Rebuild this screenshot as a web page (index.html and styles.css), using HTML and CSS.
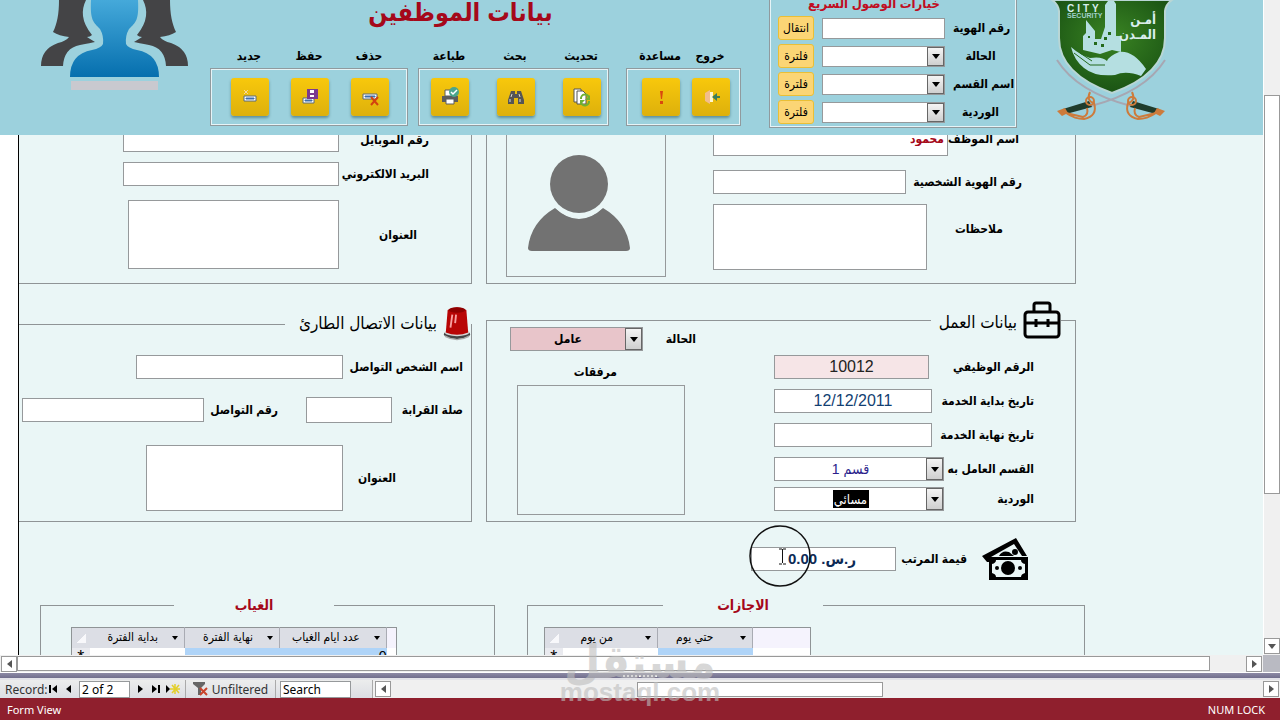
FILE: index.html
```html
<!DOCTYPE html>
<html lang="ar">
<head>
<meta charset="utf-8">
<title>بيانات الموظفين</title>
<link rel="stylesheet" href="styles.css">
</head>

<body>
<div id="work">
  <div id="form">

    <div id="header">
      <svg class="people" viewBox="0 0 150 92">
        <defs><linearGradient id="blue" x1="0" y1="0" x2="0" y2="1"><stop offset="0" stop-color="#45a9da"/><stop offset="1" stop-color="#066fae"/></linearGradient></defs>
        <path fill="#444446" d="M19 0C19 14 17 24 13 32Q19 36 29 37Q26 41 18 43Q1 49 1 66H23Q24 48 40 45Q51 43 55 42Q50 39 47 37Q50 37 52 35Q44 25 43 16Q42 8 46 0Z"/>
        <path fill="#444446" d="M130 0C130 14 132 24 136 32Q130 36 120 37Q123 41 131 43Q148 49 148 66H126Q125 48 109 45Q98 43 94 42Q99 39 102 37Q99 37 97 35Q105 25 106 16Q107 8 103 0Z"/>
        <path fill="url(#blue)" d="M51 0C50 20 53 22 60 29Q64 36 63 44Q61 48 52 50Q30 54 30 77H119Q119 54 97 50Q88 48 86 44Q85 36 89 29C96 22 99 20 98 0Z"/>
        <path fill="#c9c9cf" d="M31 81H118V90H31Z"/>
      </svg>

      <div id="tools">
        <h1 dir="rtl">بيانات الموظفين</h1>
        <div class="groups">
          <div class="group edit">
            <div class="names"><label for="new">جديد</label><label for="save">حفظ</label><label for="del">حذف</label></div>
            <div class="box">
              <button id="new"><svg viewBox="0 0 20 20"><path d="M4 9h12v5H4z" fill="#fff" stroke="#5b6b7d"/><path d="M6 11h8v1H6z" fill="#3f6fae" stroke="#3f6fae"/><path d="M4 3l4 4M8 3L4 7" stroke="#f6d9a0"/></svg></button>
              <button id="save"><svg viewBox="0 0 20 20"><path d="M3 11h11v5H3z" fill="#fff" stroke="#5b6b7d"/><path d="M5 13h7v1H5z" fill="#3f6fae" stroke="#3f6fae"/><path d="M7 2h11v10H7z" fill="#7b3a90"/><path d="M10 3h4v3h-4zM10 8h4v2h-4z" fill="#fff"/></svg></button>
              <button id="del"><svg viewBox="0 0 20 20"><path d="M3 7h14v5H3z" fill="#fff" stroke="#5b6b7d"/><path d="M5 9h10v1H5z" fill="#3f6fae" stroke="#3f6fae"/><path d="M11 10l7 8M18 10l-7 8" stroke="#d2420f" stroke-width="2"/></svg></button>
            </div>
          </div>
          <div class="group find">
            <div class="names"><label for="print">طباعة</label><label for="search">بحث</label><label for="refresh">تحديث</label></div>
            <div class="box">
              <button id="print"><svg viewBox="0 0 20 20"><path d="M2 9h16v6H2z" fill="#5d5d5d"/><path d="M5 3h7v6H5zM6 12h8v5H6z" fill="#fff" stroke="#5d5d5d"/><circle cx="14" cy="5" r="5" fill="#4ba58c"/><path d="M11 5l2 2 4-4" fill="none" stroke="#fff" stroke-width="1.500"/></svg></button>
              <button id="search"><svg viewBox="0 0 20 20"><path d="M5 4h4v3h2V4h4l3 9v4h-6v-6H8v6H2v-4z" fill="#555"/><path d="M4 12v3M6 7l-1 3M14 12v3M13 7l1 3" stroke="#ddd"/></svg></button>
              <button id="refresh"><svg viewBox="0 0 20 20"><path d="M2 2h7v13H2z" fill="#fff" stroke="#555"/><path d="M5 4h6l3 3v10H5z" fill="#fff" stroke="#555"/><path d="M9 12a4 4 0 0 1 8-1M17 14a4 4 0 0 1-8 1" fill="none" stroke="#6fb032" stroke-width="2"/><path d="M18 8v5h-5zM8 18v-5h5z" fill="#6fb032"/></svg></button>
            </div>
          </div>
          <div class="group leave">
            <div class="names"><label for="help">مساعدة</label><label for="exit">خروج</label></div>
            <div class="box">
              <button id="help"><svg viewBox="0 0 20 20"><path d="M9 4h3l-1 8H10zM9 14h3v3H9z" fill="#d9480f"/></svg></button>
              <button id="exit"><svg viewBox="0 0 20 20"><path d="M4 6l5-3v14l-5-3z" fill="#f2bd8c"/><path d="M9 5h3v10H9z" fill="#fff6d0"/><path d="M11 10l5-4v3h3v2h-3v3z" fill="#3c7d5a"/></svg></button>
            </div>
          </div>
        </div>
      </div>

      <div id="quick">
        <h2 dir="rtl">خيارات الوصول السريع</h2>
        <div class="line"><button>انتقال</button><input id="q1"><label for="q1">رقم الهوية</label></div>
        <div class="line"><button>فلترة</button><div class="combo"><select id="q2"></select><i></i></div><label for="q2">الحالة</label></div>
        <div class="line"><button>فلترة</button><div class="combo"><select id="q3"></select><i></i></div><label for="q3">اسم القسم</label></div>
        <div class="line"><button>فلترة</button><div class="combo"><select id="q4"></select><i></i></div><label for="q4">الوردية</label></div>
      </div>

      <svg class="shield" viewBox="0 0 128 124">
        <defs><radialGradient id="green" cx="50%" cy="40%" r="65%"><stop offset="0" stop-color="#3a8423"/><stop offset="1" stop-color="#174f12"/></radialGradient></defs>
        <path d="M10 60Q30 92 84 106M118 60Q98 92 44 106" fill="none" stroke="#a7a7b2" stroke-width="2"/>
        <path d="M5 0Q11 4 12 11V38C12 68 40 84 65 93C90 84 118 68 118 38V11Q119 4 125 0Z" fill="url(#green)" stroke="#b9d6d5" stroke-width="2"/>
        <path d="M36 50V36l3-3V20l9 11v8h6l4-12V5l3-4h6l2 3v32h5v16l-9-2-12 4z" fill="#b5dfe1"/>
        <path d="M41 36h2v2h-2zM47 42h3v3h-3zM54 44h3v3h-3zM61 32h3v3h-3zM57 37h3v3h-3z" fill="#23691a"/>
        <path d="M24 47Q33 55 43 58Q55 56 60 61Q62 56 72 52Q86 50 99 69L94 76Q79 70 68 75Q48 77 37 68Q27 60 24 47Z" fill="#b5dfe1"/>
        <path d="M27 53L43 65H58M33 53L45 61" fill="none" stroke="#23691a"/>
        <text x="20" y="12" class="city">CITY</text>
        <text x="20" y="18" class="security">SECURITY</text>
        <text x="109" y="24" class="amn">أمـن</text>
        <text x="109" y="39" class="amn">المـدن</text>
        <path d="M16 109L42 101l3 6-26 7z" fill="#1f3c2c"/><path d="M112 109L86 101l-3 6 26 7z" fill="#1f3c2c"/>
        <g fill="none" stroke="#cd7b3b" stroke-width="2"><circle cx="43" cy="101" r="4"/><circle cx="85" cy="101" r="4"/><path d="M43 92q-4 9 4 11q4 13-10 16q-9 0-18-6l17 4q6-2 4-9M85 92q4 9-4 11q-4 13 10 16q9 0 18-6l-17 4q-6-2-4-9"/></g>
        <path d="M10 111l8-3 3 5-6 3zM118 111l-8-3-3 5 6 3z" fill="#cd7b3b"/>
      </svg>
    </div>

    <div id="page">
      <div id="scrolled" dir="rtl">

        <div class="row first">
          <div class="panel person">
            <div class="fields">
              <div class="line name"><label for="name">اسم الموظف</label><input id="name" value="محمود"></div>
              <div class="line ident"><label for="ident">رقم الهوية الشخصية</label><input id="ident"></div>
              <div class="line notes"><label for="notes">ملاحظات</label><textarea id="notes"></textarea></div>
            </div>
            <div class="photo">
              <svg viewBox="0 0 104 98"><path d="M28 54Q52 76 76 54Q100 68 103 94Q103 97 99 97H5Q1 97 1 94Q4 68 28 54Z" fill="#727272"/><ellipse cx="52" cy="30" rx="33" ry="34" fill="#eaf6f6"/><ellipse cx="52" cy="30" rx="29" ry="29" fill="#727272"/></svg>
            </div>
          </div>
          <div class="panel contact">
            <div class="line"><label for="mobile">رقم الموبايل</label><input id="mobile"></div>
            <div class="line"><label for="email">البريد الالكتروني</label><input id="email"></div>
            <div class="line addr"><label for="addr">العنوان</label><textarea id="addr"></textarea></div>
          </div>
        </div>

        <div class="row second">
          <fieldset class="job">
            <legend>
              <svg viewBox="0 0 38 38" fill="none" stroke="#000" stroke-width="3"><rect x="2" y="11" width="34" height="25" rx="3"/><path d="M11 11V4q0-2 2-2h12q2 0 2 2v7M2 22h34M13 18v8M25 18v8"/></svg>
              <span>بيانات العمل</span>
            </legend>
            <div class="cols">
              <div class="fields">
                <div class="line num"><label for="num">الرقم الوظيفي</label><input id="num" value="10012"></div>
                <div class="line"><label for="from">تاريخ بداية الخدمة</label><input id="from" value="12/12/2011"></div>
                <div class="line"><label for="to">تاريخ نهاية الخدمة</label><input id="to"></div>
                <div class="line pick"><label for="dept">القسم العامل به</label><div class="combo" dir="ltr"><select id="dept" dir="rtl"><option>قسم 1</option></select><i></i></div></div>
                <div class="line pick"><label for="shift">الوردية</label><div class="combo" dir="ltr"><select id="shift" dir="rtl"><option>مسائي</option></select><i></i></div></div>
              </div>
              <div class="status">
                <div class="line"><label for="state">الحالة</label><div class="combo" dir="ltr"><select id="state" dir="rtl"><option>عامل</option></select><i></i></div></div>
                <b>مرفقات</b>
                <div class="files"></div>
              </div>
            </div>
          </fieldset>
          <fieldset class="urgent">
            <legend>
              <svg viewBox="0 0 30 38"><ellipse cx="15" cy="30" rx="14" ry="5" fill="#444"/><ellipse cx="15" cy="28" rx="13" ry="4" fill="#d8d8d8"/><path d="M2 31q13 8 26 0v2q-13 7-26 0z" fill="#aaa"/><path d="M5 4Q15-2 25 4l2 24Q15 33 3 28Z" fill="#b80505"/><ellipse cx="15" cy="4" rx="9" ry="3" fill="#8f0000"/><path d="M10 9l-2 14M14 9l-1 9" stroke="#f7a0a0" stroke-width="2"/></svg>
              <span>بيانات الاتصال الطارئ</span>
            </legend>
            <div class="line who"><label for="who">اسم الشخص التواصل</label><input id="who"></div>
            <div class="line rel"><label for="rel">صلة القرابة</label><input id="rel"><label for="phone">رقم التواصل</label><input id="phone"></div>
            <div class="line addr2"><label for="addr2">العنوان</label><textarea id="addr2"></textarea></div>
          </fieldset>
        </div>

        <div class="salary">
          <svg viewBox="0 0 46 44"><path d="M0 19L34 1l11 18h-5L32 7 9 20v5H5z" fill="#000"/><path d="M17 19q3-6 10-4l5 4z" fill="#000"/><circle cx="33" cy="15" r="3"/><path d="M7 20h39v23H7z" fill="#000"/><path d="M14 23h25q0 3 4 4v9q-4 1-4 4H14q0-3-4-4v-9q4-1 4-4z" fill="#eaf6f6"/><circle cx="26" cy="31" r="7" fill="#000"/><circle cx="15" cy="31" r="2"/><circle cx="38" cy="31" r="2"/></svg>
          <label for="pay">قيمة المرتب</label>
          <div class="pay">
            <input id="pay" value="ر.س. 0.00">
            <svg class="pointer" viewBox="0 0 62 62" fill="none" stroke="#111"><circle cx="31" cy="31" r="30" stroke-width="1.500"/><path d="M30 24h3M34 24h3M33.500 24v14M30 39h3M34 39h3"/></svg>
          </div>
        </div>

        <div class="row third">
          <fieldset class="leaves">
            <legend><span>الاجازات</span></legend>
            <table dir="ltr">
              <tr><th class="corner all"></th><th><span>من يوم</span></th><th><span>حتي يوم</span></th><td class="rest"></td></tr>
              <tr><th class="corner">*</th><td></td><td class="sel"></td><td></td></tr>
            </table>
          </fieldset>
          <fieldset class="absence">
            <legend><span>الغياب</span></legend>
            <table dir="ltr">
              <tr><th class="corner all"></th><th><span>بداية الفترة</span></th><th><span>نهاية الفترة</span></th><th class="days"><span>عدد ايام الغياب</span></th><td class="rest"></td></tr>
              <tr><th class="corner">*</th><td></td><td class="sel"></td><td class="sel">0</td><td></td></tr>
            </table>
          </fieldset>
        </div>

      </div>
    </div>
  </div>

  <div id="vbar"><div class="thumb"></div><button class="arrow down"></button></div>
</div>

<div id="hbar"><button class="arrow left"></button><div class="thumb"></div><button class="arrow right"></button><div class="grip"></div></div>
<div id="split"><span></span></div>

<div id="record">
  <label for="pos">Record:</label>
  <button><svg viewBox="0 0 8 8"><path d="M0 0h2v8H0zM8 0v8L3 4z"/></svg></button>
  <button><svg viewBox="0 0 8 8"><path d="M6 0v8L1 4z"/></svg></button>
  <input id="pos" value="2 of 2">
  <button class="next"><svg viewBox="0 0 8 8"><path d="M2 0v8l5-4z"/></svg></button>
  <button><svg viewBox="0 0 8 8"><path d="M0 0v8l5-4zM6 0h2v8H6z"/></svg></button>
  <button class="add"><svg viewBox="0 0 14 10"><path d="M0 1v8l4-4z"/><path d="M9 0v10M4 5h10M6 1l7 8M13 1L6 9" stroke="#e3cf2b" stroke-width="1.500"/></svg></button>
  <button class="filter"><svg viewBox="0 0 16 14"><path d="M0 0h12v2L8 6v7H5V6L0 2z" fill="#666"/><path d="M7 6l7 7M14 6l-7 7" stroke="#c9432b" stroke-width="2"/></svg>Unfiltered</button>
  <input id="find" value="Search" aria-label="Search">
  <div class="track"><button class="arrow left"></button><div class="thumb"></div><button class="arrow right"></button></div>
</div>

<div id="bottom"><span>Form View</span><span>NUM LOCK</span></div>

<div id="mark"><b>مستقل</b><span>mostaql.com</span></div>
</body>
</html>
```
FILE: styles.css
```css
*{ margin:0; padding:0; box-sizing:border-box;}
body{ height:100vh; display:flex; flex-direction:column; overflow:hidden; position:relative; background:#fff; font-family:"Liberation Sans","DejaVu Sans Condensed","DejaVu Sans",sans-serif; font-size:12px; color:#000;}
svg{ display:block; flex:none;}
button,input,select,textarea{ font:inherit; color:inherit; border-radius:0;}
input,textarea,.combo{ border:1px solid #96999b; background:#fff; height:24px; min-width:0;}
textarea{ resize:none; display:block;}
fieldset{ border:1px solid #8f9496; min-width:0;}
label{ font-weight:bold; white-space:nowrap;}
.line{ display:flex; align-items:center;}

#work{ flex:1; min-height:0; display:flex;}
#form{ flex:1; min-width:0; display:flex; flex-direction:column;}

/* header */
#header{ flex:none; height:135px; overflow:hidden; display:flex; align-items:flex-start; background:#9cd1dd; padding-left:40px;}
.people{ width:150px; height:92px; margin-right:20px;}
#tools{ width:531px; height:126px; display:flex; flex-direction:column; justify-content:flex-end;}
#tools h1{ color:#a5081a; font-size:25px; line-height:32px; text-align:center; margin-bottom:20px; padding-right:30px;}
.groups{ display:flex;}
.names{ display:flex; height:20px; line-height:16px;}
.names label{ width:38px; display:flex; justify-content:center;}
.box{ display:flex; height:58px; align-items:center; border:1px solid #909a9e; outline:1px solid #e6f4f7; outline-offset:-2px;}
.names,.box{ padding-left:20px; gap:22px;}
.edit{ width:198px; margin-right:10px;}
.find{ width:191px; margin-right:17px;}
.find .names,.find .box{ padding-left:12px; gap:28px;}
.leave{ width:115px;}
.leave .names,.leave .box{ padding-left:15px; gap:12px;}
.box button{ width:38px; height:38px; border:0; border-radius:3px; background:linear-gradient(#f8c80c,#ddb00c); box-shadow:0 2px 3px #5f9099;}
.box svg{ width:20px; height:20px; margin:auto;}

#quick{ width:248px; height:128px; margin-left:28px; display:flex; flex-direction:column; justify-content:flex-end; gap:4px; padding:0 8px 3px; border:1px solid #909a9e; border-top:0; box-shadow:inset -1px -1px #e6f4f7,inset 1px 0 #e6f4f7;}
#quick h2{ color:#c00d22; font-size:13px; line-height:16px; text-align:center; padding-right:38px;}
#quick .line{ flex:none; gap:8px; height:24px;}
#quick button{ width:36px; height:24px; flex:none; border:1px solid #eabf35; border-radius:3px; background:#fbd575; line-height:20px;}
#quick input,#quick .combo{ width:123px; height:21px; flex:none;}
#quick label{ flex:1; text-align:center; direction:rtl;}
.shield{ width:128px; height:124px; margin-left:30px;}
.city{ font:bold 10px "Liberation Sans",sans-serif; fill:#d9eeee; letter-spacing:3px;}
.security{ font:bold 7px "Liberation Sans",sans-serif; fill:#9fcfc8;}
.amn{ font:bold 13px "DejaVu Sans Condensed","DejaVu Sans",sans-serif; fill:#d9eeee; text-anchor:end;}

/* drop down boxes */
.combo{ display:flex;}
.combo select{ flex:1; min-width:0; appearance:none; border:0; background:transparent; text-align:center; text-align-last:center;}
.combo i{ width:17px; display:flex; align-items:center; justify-content:center; border:1px solid #666; background:linear-gradient(#f4f4f4,#cfcfcf);}
.combo i:after{ content:""; border:4px solid transparent; border-top:5px solid #000; border-bottom:0;}

/* form page, seen part way down */
#page{ flex:1; min-height:0; overflow:hidden; margin-left:18px; border-left:1px solid #000; background:#eaf6f6;}
#scrolled{ margin-top:-20px; padding-right:187px;}
.row{ display:grid; grid-template-columns:590fr 453fr; gap:14px;}
.first{ height:169px;}
.panel{ border:1px solid #8f9496; min-width:0;}
.contact,.urgent{ border-left:0;}
.person{ display:flex; justify-content:space-between; padding-right:53px; padding-left:19px;}
.person .fields{ width:309px; padding-top:12px;}
.person input,.person textarea{ flex:1;}
.person .name label{ width:74px; padding-right:3px; padding-bottom:6px;}
.person .name input{ height:28px; color:#a5081a; font-weight:bold; padding:0 3px 6px;}
.ident{ margin:14px 0 10px;}
.ident label{ width:116px;}
.person .notes{ align-items:stretch;}
.notes label{ width:95px; padding-right:19px; line-height:50px;}
.notes textarea{ height:66px;}
.photo{ width:160px; height:161px; border:1px solid #96999b; display:flex; align-items:flex-end; justify-content:center; padding-bottom:24px; padding-right:14px;}
.photo svg{ width:104px; height:98px;}
.contact{ padding:12px 42px 0 0;}
.contact .line{ margin-bottom:10px;}
.contact label{ width:90px;}
.contact input{ width:216px;}
.contact textarea{ width:211px; height:69px;}
.contact .addr{ margin-top:14px;}
.contact .addr label{ padding-right:12px;}

.second{ margin-top:17px; height:221px;}
.second legend{ display:flex; align-items:center; height:38px; font-size:17px; line-height:20px; white-space:nowrap;}
.job legend{ margin-right:14px; padding-left:8px; gap:6px;}
.job legend svg{ width:38px; height:38px;}
.job legend span{ padding-top:6px;}
.cols{ display:flex; justify-content:space-between; margin-top:-12px; padding:0 41px 0 23px;}
.job .fields{ width:260px; padding-top:28px;}
.job .fields .line{ justify-content:space-between; margin-bottom:10px;}
.job .fields input{ width:158px; text-align:center; font-size:16px; color:#123f72;}
.job .fields .num input{ width:155px; margin-left:auto; background:#f6e5e7; color:#222;}
.job .fields .num label{ width:105px;}
.job .fields .combo{ width:170px; flex:none; color:#2b1f8c;}
.job .fields .pick{ margin-bottom:6px;}
.job .fields .pick label{ width:90px;}
#dept{ font-size:14px;}
#shift{ color:#fff; font-size:13px; background:linear-gradient(#000,#000) center/36px 18px no-repeat;}
.status{ width:186px;}
.status .line{ justify-content:space-between;}
.status .combo{ width:133px; background:#e8c5ca; font-weight:bold;}
.status b{ display:block; line-height:20px; margin:11px 0 3px; padding-right:79px;}
.files{ width:168px; height:130px; margin-right:11px; border:1px solid #96999b;}
.urgent{ margin-top:4px;}
.urgent legend{ padding-left:14px; gap:6px;}
.urgent legend svg{ width:28px; height:38px;}
.urgent .line{ padding-right:8px; margin-top:18px;}
.urgent .who{ margin-top:12px;}
.who label{ width:120px;}
.who input{ width:207px;}
.rel label{ width:71px;}
.rel #rel{ width:86px; height:26px; margin-left:28px;}
.rel #phone{ width:182px; margin-right:3px;}
.urgent .addr2{ margin-top:22px;}
.addr2 label{ width:120px; padding-right:67px;}
.addr2 textarea{ width:197px; height:66px;}

.salary{ display:flex; align-items:center; height:44px; margin-top:15px; padding-right:48px;}
.salary svg{ width:46px; height:44px;}
.salary label{ width:86px; padding-right:15px; flex:none;}
.pay{ position:relative;}
.pay input{ width:145px; font-weight:bold; font-size:15px; color:#0d2a55; padding-right:39px;}
.salary .pointer{ position:absolute; left:-2px; top:-22px; width:62px; height:62px;}

.third{ grid-template-columns:558fr 455fr; gap:32px; margin-top:15px; margin-right:-9px; margin-left:21px;}
.third fieldset{ height:100px;}
.leaves{ padding-left:16px;}
.absence{ padding-left:30px;}
.third legend{ width:160px; color:#a5081a; font-weight:bold; font-size:14px; line-height:18px;}
.third legend span{ display:block; text-align:center;}
.leaves legend{ margin-right:261px;}
.absence legend{ margin-right:160px;}
.third table{ border:1px solid #8f9496; border-collapse:collapse; table-layout:fixed; background:#fff; margin-top:13px; margin-right:auto;}
.leaves table{ width:267px;}
.absence table{ width:326px;}
.third th{ width:95px; height:20px; background:#dcdee5; border-right:1px solid #a9abb3; font-weight:normal; line-height:19px;}
.third th span{ display:flex; align-items:center; justify-content:space-between; padding:0 6px 0 18px;}
.third th span:after{ content:""; border:3px solid transparent; border-top:4px solid #000; border-bottom:0;}
.third .days span{ padding-left:12px;}
.third .corner{ width:18px; background:#e9eaef; font-size:18px; border-right:0; vertical-align:top;}
.third .all{ background:linear-gradient(135deg,transparent 50%,#f8f8fb 50%) center/10px 10px no-repeat #dcdee5;}
.third .days{ width:107px;}
.third td{ height:26px; text-align:right; vertical-align:top; font-size:14px;}
.third .rest{ height:20px; background:#f5f3fd;}
.third .sel{ background:#afd4f8;}

/* scroll bars */
.arrow{ width:16px; height:16px; flex:none; display:flex; align-items:center; justify-content:center; border:1px solid #999; background:#fff;}
.arrow:after{ content:""; border:4px solid transparent;}
.left:after{ border-right:5px solid #555; border-left:0;}
.right:after{ border-left:5px solid #555; border-right:0;}
.down:after{ border-top:5px solid #555; border-bottom:0;}
.thumb{ border:1px solid #999; background:#fff;}
#vbar{ width:17px; background:#f0f0f0; border-left:1px solid #fff; display:flex; flex-direction:column; justify-content:space-between; padding-top:95px; padding-bottom:1px;}
#vbar .thumb{ height:399px;}
#hbar{ height:17px; display:flex; align-items:center; background:#f0f0f0; padding-left:1px;}
#hbar .thumb{ flex:1; height:15px; margin-right:36px;}
#hbar .grip{ width:17px; height:17px; margin-left:1px; background:#b9bac2;}
#split{ height:8px; background:linear-gradient(#8d8aa5,#716e8d); border-top:1px solid #fff; border-bottom:2px solid #e2e2e8;}
#split span{ display:block; width:35px; height:2px; margin:2px auto 0; background:repeating-linear-gradient(90deg,#fff 0 2px,transparent 2px 4px);}

#record{ height:18px; display:flex; align-items:center; background:linear-gradient(#eceded,#dcdee4); font-family:"Noto Sans",sans-serif; color:#333; padding-left:5px;}
#record label{ font-weight:normal; width:42px;}
#record button{ border-width:0;}
#record > button{ width:12px; margin-right:4px; background:none; display:flex; justify-content:center; align-items:center;}
#record > button svg{ width:8px; height:8px;}
#record input{ height:17px; padding:0 2px; color:#000;}
#pos{ width:51px; margin-right:4px;}
#record .add{ width:14px; margin-right:5px;}
#record .add svg{ width:14px; height:10px;}
#record .filter{ width:91px; height:18px; gap:3px; border-left:1px solid #aaa; border-right:1px solid #aaa;}
#record .filter svg{ width:16px; height:14px;}
#find{ width:71px; margin-right:21px;}
.track{ flex:1; display:flex; align-items:center; height:18px; background:#f0f0f0; border-left:1px solid #aaa; padding:0 1px 0 2px;}
.track .thumb{ width:246px; height:15px; margin-left:246px; margin-right:auto;}
#record .track button{ border-width:1px;}

#bottom{ height:22px; display:flex; align-items:center; justify-content:space-between; padding:0 15px 0 7px; background:#8f1f2d; color:#fff; font-family:"Noto Sans",sans-serif; font-size:11px;}

/* watermark over the bars */
#mark{ position:absolute; left:50%; bottom:14px; width:160px; margin-left:-80px; display:flex; flex-direction:column; align-items:center; color:#bdbdbd; opacity:.6; font-weight:bold; pointer-events:none;}
#mark b{ font-size:46px; line-height:32px;}
#mark span{ font-size:26px; line-height:28px;}
```
